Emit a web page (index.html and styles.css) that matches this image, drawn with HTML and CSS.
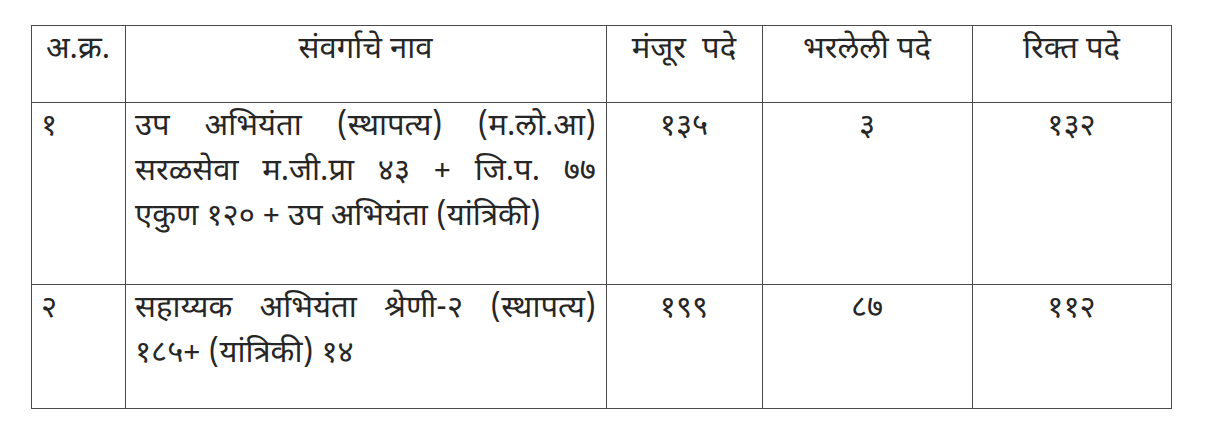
FILE: index.html
```html
<!DOCTYPE html>
<html lang="mr">
<head>
<meta charset="utf-8">
<link rel="stylesheet" href="styles.css">
</head>
<body>
<div class="page">
<table class="posts">
  <colgroup>
    <col class="c1"><col class="c2"><col class="c3"><col class="c4"><col class="c5">
  </colgroup>
  <thead>
    <tr class="head">
      <th>अ.क्र.</th>
      <th>संवर्गाचे नाव</th>
      <th>मंजूर&nbsp;&nbsp;पदे</th>
      <th>भरलेली पदे</th>
      <th>रिक्त पदे</th>
    </tr>
  </thead>
  <tbody>
    <tr class="r1">
      <td class="num">१</td>
      <td class="name">
        <span class="line full">उप अभियंता (स्थापत्य) (म.लो.आ)</span>
        <span class="line full">सरळसेवा म.जी.प्रा ४३ + जि.प. ७७</span>
        <span class="line">एकुण १२० + उप अभियंता (यांत्रिकी)</span>
      </td>
      <td class="val">१३५</td>
      <td class="val">३</td>
      <td class="val">१३२</td>
    </tr>
    <tr class="r2">
      <td class="num">२</td>
      <td class="name">
        <span class="line full">सहाय्यक अभियंता श्रेणी-२ (स्थापत्य)</span>
        <span class="line">१८५+ (यांत्रिकी) १४</span>
      </td>
      <td class="val">१९९</td>
      <td class="val">८७</td>
      <td class="val">११२</td>
    </tr>
  </tbody>
</table>
</div>
</body>
</html>
```

FILE: styles.css
```css
html, body {
  margin: 0;
  padding: 0;
  background: #ffffff;
}
.page {
  padding: 25px 0 0 31px;
}
.posts {
  border-collapse: collapse;
  table-layout: fixed;
  width: 1140px;
  font-family: "Noto Sans Devanagari", "Lohit Devanagari", "FreeSerif", "Noto Sans", sans-serif;
  color: #262626;
  font-size: 31px;
}
.c1 { width: 94px; }
.c2 { width: 481px; }
.c3 { width: 156px; }
.c4 { width: 210px; }
.c5 { width: 199px; }
.posts th, .posts td {
  border: 1px solid #4a4a4a;
  vertical-align: top;
  padding: 2px 10px 2px 9px;
  line-height: 45px;
}
.posts th {
  font-weight: normal;
  text-align: center;
}
.head { height: 77px; }
.r1 { height: 182px; }
.r2 { height: 124px; }
.num { text-align: left; }
.name .line {
  display: block;
  text-align: left;
}
.name .line.full {
  text-align: justify;
  text-align-last: justify;
}
.val { text-align: center; }
```
